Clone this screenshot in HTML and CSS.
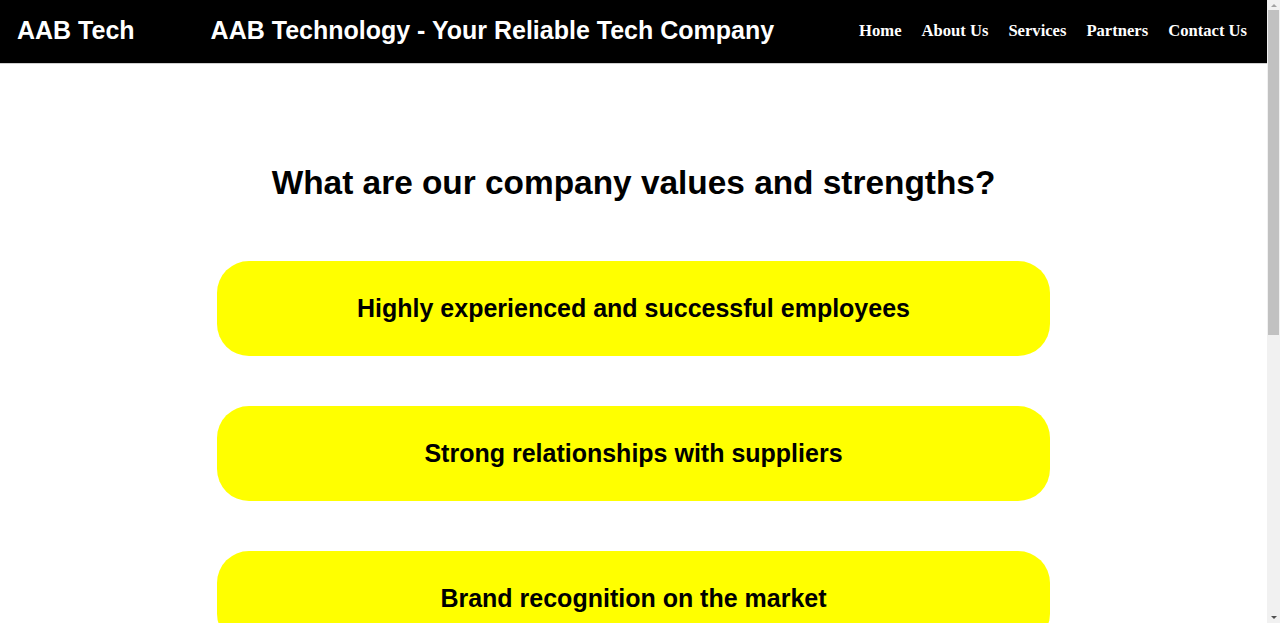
FILE: index.html
```html
<!DOCTYPE html>
<html lang="en">
<head>
<meta charset="utf-8">
<title>AAB Technology</title>
<link rel="stylesheet" href="styles.css">
</head>
<body>
<header class="topbar">
  <div class="logo">AAB Tech</div>
  <div class="tagline">AAB Technology - Your Reliable Tech Company</div>
  <nav class="nav">
    <a href="#">Home</a>
    <a href="#">About Us</a>
    <a href="#">Services</a>
    <a href="#">Partners</a>
    <a href="#">Contact Us</a>
  </nav>
</header>
<main class="values">
  <h1 class="values-title">What are our company values and strengths?</h1>
  <div class="card">Highly experienced and successful employees</div>
  <div class="card">Strong relationships with suppliers</div>
  <div class="card">Brand recognition on the market</div>
  <div class="card">Fast and reliable customer support</div>
  <div class="card">Competitive and fair prices</div>
</main>
<div class="scrollbar" aria-hidden="true">
  <span class="arrow arrow-up"></span>
  <span class="thumb"></span>
  <span class="arrow arrow-down"></span>
</div>
</body>
</html>
```
FILE: styles.css
```css
html, body {
  margin: 0;
  padding: 0;
  background: #fff;
}
body {
  font-family: "Liberation Sans", Arial, sans-serif;
  color: #000;
  margin-right: 13px;
}
.topbar {
  display: flex;
  align-items: center;
  height: 61px;
  padding-bottom: 2px;
  background: #000;
  border-bottom: 1px solid #cfcfcf;
  padding-left: 17px;
  padding-right: 20px;
  color: #fff;
}
.logo {
  font-size: 25px;
  font-weight: bold;
}
.tagline {
  font-size: 25px;
  font-weight: bold;
  margin-left: 76px;
}
.nav {
  margin-left: auto;
  display: flex;
  gap: 20px;
  font-family: "Liberation Serif", "Times New Roman", serif;
  font-weight: bold;
  font-size: 16.6px;
}
.nav a {
  color: #fff;
  text-decoration: none;
}
.values {
  display: flex;
  flex-direction: column;
  align-items: center;
  padding: 100px 0 60px;
  gap: 50px;
}
.values-title {
  margin: 0 0 9px;
  font-size: 33.4px;
  font-weight: bold;
  text-align: center;
}
.card {
  width: 833px;
  height: 95px;
  box-sizing: border-box;
  display: flex;
  align-items: center;
  justify-content: center;
  background: #ffff00;
  border-radius: 32px;
  font-size: 25px;
  font-weight: bold;
}
.scrollbar {
  position: fixed;
  top: 0;
  right: 0;
  bottom: 0;
  width: 13px;
  background: #f1f1f1;
  display: flex;
  flex-direction: column;
  align-items: center;
}
.arrow {
  width: 0;
  height: 0;
  border-left: 3.5px solid transparent;
  border-right: 3.5px solid transparent;
}
.arrow-up {
  margin: 4px 0 3px;
  border-bottom: 3.5px solid #a3a3a3;
}
.arrow-down {
  margin: auto 0 4px;
  border-top: 3.5px solid #505050;
}
.thumb {
  width: 11px;
  height: 325px;
  background: #c1c1c1;
}
```
